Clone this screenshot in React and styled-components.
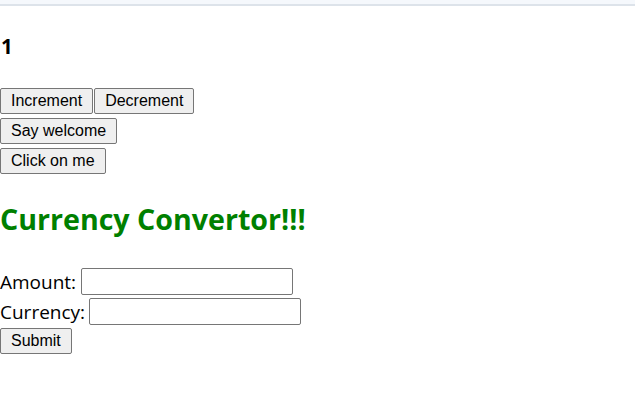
import React, { useState } from "react";
import styled, { createGlobalStyle } from "styled-components";

const Global = createGlobalStyle`
  html, body { margin: 0; padding: 0; background: #ffffff; }
  body { font-family: "Open Sans", "Noto Sans", sans-serif; color: #000; }
`;

const TopStrip = styled.div`
  height: 4px;
  background: #f5f8fc;
  border-bottom: 2px solid #dde3ea;
`;

const Page = styled.div`
  display: flex;
  flex-direction: column;
  align-items: flex-start;
`;

const Count = styled.h3`
  margin: 26px 0 0 0;
  padding-left: 1px;
  font-size: 20.5px;
  line-height: 28px;
  font-weight: 700;
`;

const ButtonStack = styled.div`
  display: flex;
  flex-direction: column;
  gap: 4px;
  margin-top: 28px;
`;

const ButtonRow = styled.div`
  display: flex;
`;

const Btn = styled.button`
  box-sizing: border-box;
  height: 26px;
  margin: 0 ${(p) => (p.$gap ? "1px" : "0")} 0 0;
  padding: 0 10px;
  font-family: "Liberation Sans", Arial, sans-serif;
  font-size: 16px;
  color: #000;
  background: #efefef;
  border: 1px solid #767676;
  border-radius: 2px;
  cursor: pointer;
`;

const Heading = styled.h2`
  margin: 28px 0 0 0;
  font-size: 28.6px;
  line-height: 34px;
  font-weight: 700;
  color: #008000;
`;

const Form = styled.form`
  display: flex;
  flex-direction: column;
  align-items: flex-start;
  gap: 3px;
  margin-top: 32px;
`;

const Field = styled.label`
  display: flex;
  align-items: center;
  gap: 4px;
  height: 27px;
  font-size: 19px;
`;

const Input = styled.input`
  box-sizing: border-box;
  width: 212px;
  height: 27px;
  margin: 0 0 0 ${(p) => p.$shift || 0}px;
  border: 1px solid #767676;
  border-radius: 2px;
  background: #fff;
  font-size: 16px;
`;

export default function App() {
  const [count, setCount] = useState(1);
  return (
    <>
      <Global />
      <TopStrip />
      <Page>
        <Count>{count}</Count>
        <ButtonStack>
          <ButtonRow>
            <Btn $gap onClick={() => setCount(count + 1)}>Increment</Btn>
            <Btn onClick={() => setCount(count - 1)}>Decrement</Btn>
          </ButtonRow>
          <ButtonRow>
            <Btn>Say welcome</Btn>
          </ButtonRow>
          <ButtonRow>
            <Btn>Click on me</Btn>
          </ButtonRow>
        </ButtonStack>
        <Heading>Currency Convertor!!!</Heading>
        <Form onSubmit={(e) => e.preventDefault()}>
          <Field>
            Amount: <Input type="text" $shift={1} />
          </Field>
          <Field>
            Currency: <Input type="text" />
          </Field>
          <Btn type="submit">Submit</Btn>
        </Form>
      </Page>
    </>
  );
}
